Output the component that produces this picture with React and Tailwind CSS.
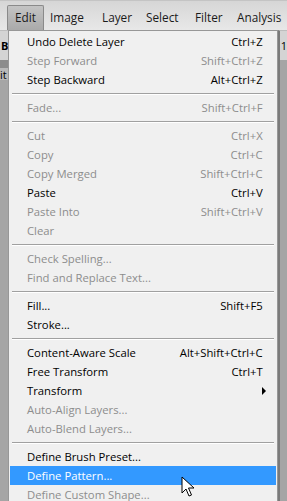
const FONT = { fontFamily: '"Open Sans", "Noto Sans", sans-serif' }

const BAR = [
  ['Edit', ''],
  ['Image', 'w-[52px]'],
  ['Layer', 'w-[44px]'],
  ['Select', 'w-[49px]'],
  ['Filter', 'w-[42px]'],
  ['Analysis', ''],
]

// groups of [label, shortcut, enabled, submenu]
const GROUPS = [
  [
    ['Undo Delete Layer', 'Ctrl+Z', true],
    ['Step Forward', 'Shift+Ctrl+Z', false],
    ['Step Backward', 'Alt+Ctrl+Z', true],
  ],
  [['Fade...', 'Shift+Ctrl+F', false]],
  [
    ['Cut', 'Ctrl+X', false],
    ['Copy', 'Ctrl+C', false],
    ['Copy Merged', 'Shift+Ctrl+C', false],
    ['Paste', 'Ctrl+V', true],
    ['Paste Into', 'Shift+Ctrl+V', false],
    ['Clear', '', false],
  ],
  [
    ['Check Spelling...', '', false],
    ['Find and Replace Text...', '', false],
  ],
  [
    ['Fill...', 'Shift+F5', true],
    ['Stroke...', '', true],
  ],
  [
    ['Content-Aware Scale', 'Alt+Shift+Ctrl+C', true],
    ['Free Transform', 'Ctrl+T', true],
    ['Transform', '', true, true],
    ['Auto-Align Layers...', '', false],
    ['Auto-Blend Layers...', '', false],
  ],
  [
    ['Define Brush Preset...', '', true],
    ['Define Pattern...', '', true],
    ['Define Custom Shape...', '', false],
  ],
]

function Cursor() {
  return (
    <svg className="absolute left-[181px] top-[476px]" width="14" height="22" viewBox="0 0 14 22">
      <path d="M1 1 L1 17 L5 13 L8 20 L10.5 19 L7.5 12 L13 12 Z" fill="#fff" stroke="#000" strokeWidth="1" />
    </svg>
  )
}

function Item({ label, shortcut, enabled, sub, active }) {
  const color = active ? 'text-white' : enabled ? 'text-black' : 'text-[#8d8d8d]'
  return (
    <div className={`h-[19px] flex items-center justify-between pl-[17px] pr-[13px] ${active ? 'bg-[#3399ff]' : ''} ${color}`}>
      <span>{label}</span>
      {sub ? (
        <svg width="5" height="8" viewBox="0 0 5 8" className="mr-[-4px]">
          <path d="M0 0 L4 4 L0 8 Z" fill="#000" />
        </svg>
      ) : (
        <span>{shortcut}</span>
      )}
    </div>
  )
}

export default function App() {
  return (
    <div className="relative w-[287px] h-[501px] overflow-hidden bg-[#a3a3a3] text-[11.3px] leading-none" style={FONT}>
      <div className="h-[30px] flex items-end bg-gradient-to-b from-[#d6d6d6] to-[#e8e8e8] border-t border-[#c4c4c4] pl-[7px] text-[11.8px] text-[#1a1a1a]">
        {BAR.map(([b, w], i) => (
          <div
            key={b}
            className={`h-[25px] flex items-center shrink-0 ${i === 0 ? 'px-[7px] bg-gradient-to-b from-[#c4c4c4] to-[#aaaaaa] border border-b-0 border-[#8a8a8a] rounded-t-[2px] mr-[6px]' : w}`}
          >
            {b}
          </div>
        ))}
      </div>

      <div className="flex h-[471px]">
        <div className="w-[8px] flex flex-col text-[11px] font-bold text-black">
          <div className="h-[30px] bg-[#d4d4d4] border-t border-[#bdbdbd] flex items-center pl-[1px]">B</div>
          <div className="h-[8px] bg-[#8c8c8c]" />
          <div className="h-[12px] bg-[#b9b9b9] flex items-center font-normal">it</div>
          <div className="flex-1 bg-[#a5a5a5]" />
        </div>

        <div className="w-[274px] bg-[#f0f0f0] border border-b-0 border-[#979797] pt-[1px] px-[1px]">
          {GROUPS.map((g, gi) => (
            <div key={gi}>
              {gi > 0 && (
                <div className="h-[9px] flex items-center px-[2px]">
                  <div className="flex-1 h-[2px] border-t border-[#a0a0a0] border-b border-b-white" />
                </div>
              )}
              {g.map(([label, shortcut, enabled, sub]) => (
                <Item key={label} label={label} shortcut={shortcut} enabled={enabled} sub={sub} active={label === 'Define Pattern...'} />
              ))}
            </div>
          ))}
        </div>

        <div className="flex-1 flex flex-col">
          <div className="h-[30px] bg-[#d4d4d4] border-t border-[#bdbdbd] border-l-2 border-l-[#7a7a7a] flex items-center text-[11px] pl-[1px]">1</div>
          <div className="flex-1 bg-[#a5a5a5] border-l-2 border-l-[#7a7a7a]" />
        </div>
      </div>
      <Cursor />
    </div>
  )
}
